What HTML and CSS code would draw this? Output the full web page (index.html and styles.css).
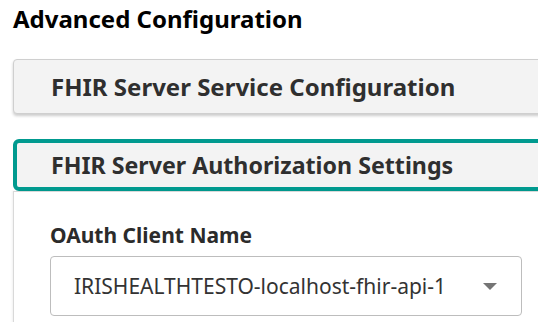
FILE: index.html
```html
<!DOCTYPE html>
<html lang="en">
<head>
    <meta charset="UTF-8">
    <meta name="viewport" content="width=device-width, initial-scale=1.0">
    <title>Advanced Configuration</title>
    <link rel="stylesheet" href="styles.css">
</head>
<body>
    <div class="page">
        <h2 class="page-title">Advanced Configuration</h2>

        <!-- Collapsed section -->
        <div class="panel">
            <div class="panel-header">FHIR Server Service Configuration</div>
        </div>

        <!-- Expanded section (focused) -->
        <div class="panel panel-open">
            <div class="panel-header is-focused">FHIR Server Authorization Settings</div>
            <div class="panel-body">
                <label class="field-label" for="oauth-client">OAuth Client Name</label>
                <div class="select">
                    <span class="select-value" id="oauth-client">IRISHEALTHTESTO-localhost-fhir-api-1</span>
                    <svg class="select-caret" width="14" height="7" viewBox="0 0 14 7">
                        <path d="M0 0 L14 0 L7 7 Z" fill="#757575"/>
                    </svg>
                </div>
            </div>
        </div>
    </div>
</body>
</html>
```

FILE: styles.css
```css
/* Base */
* {
    margin: 0;
    padding: 0;
    box-sizing: border-box;
}

body {
    font-family: 'Noto Sans', 'Open Sans', sans-serif;
    color: #333;
    background-color: #fff;
    overflow: hidden;
}

.page {
    width: 600px;
    padding: 2px 0 0 13px;
}

.page-title {
    font-size: 24px;
    font-weight: 700;
    color: #000;
    line-height: 34px;
    margin-bottom: 23px;
}

/* Panels */
.panel {
    margin-bottom: 25px;
}

.panel-header {
    height: 55px;
    display: flex;
    align-items: center;
    padding-left: 37px;
    font-size: 24px;
    font-weight: 700;
    color: #2f2f2f;
    background-color: #f3f3f3;
    border: 1px solid #cfcfcf;
    border-radius: 4px;
    box-shadow: 0 2px 3px rgba(0, 0, 0, 0.2);
}

.panel-header.is-focused {
    height: 52px;
    padding-left: 34px;
    font-size: 23.2px;
    border: 4px solid #009a8f;
    border-radius: 6px;
    box-shadow: none;
}

.panel-body {
    border-top: 1px solid #d9d9d9;
    border-left: 1px solid #d9d9d9;
    box-shadow: -1px 0 2px rgba(0, 0, 0, 0.06);
    padding: 29px 0 20px 36px;
}

/* Form field */
.field-label {
    display: block;
    font-size: 21px;
    font-weight: 700;
    color: #2b2b2b;
    line-height: 28px;
    margin-bottom: 7px;
}

.select {
    width: 472px;
    height: 60px;
    display: flex;
    align-items: center;
    justify-content: space-between;
    padding: 0 24px 0 23px;
    border: 1px solid #bdbdbd;
    border-radius: 4px;
}

.select-value {
    font-size: 21px;
    color: #333;
}
```
